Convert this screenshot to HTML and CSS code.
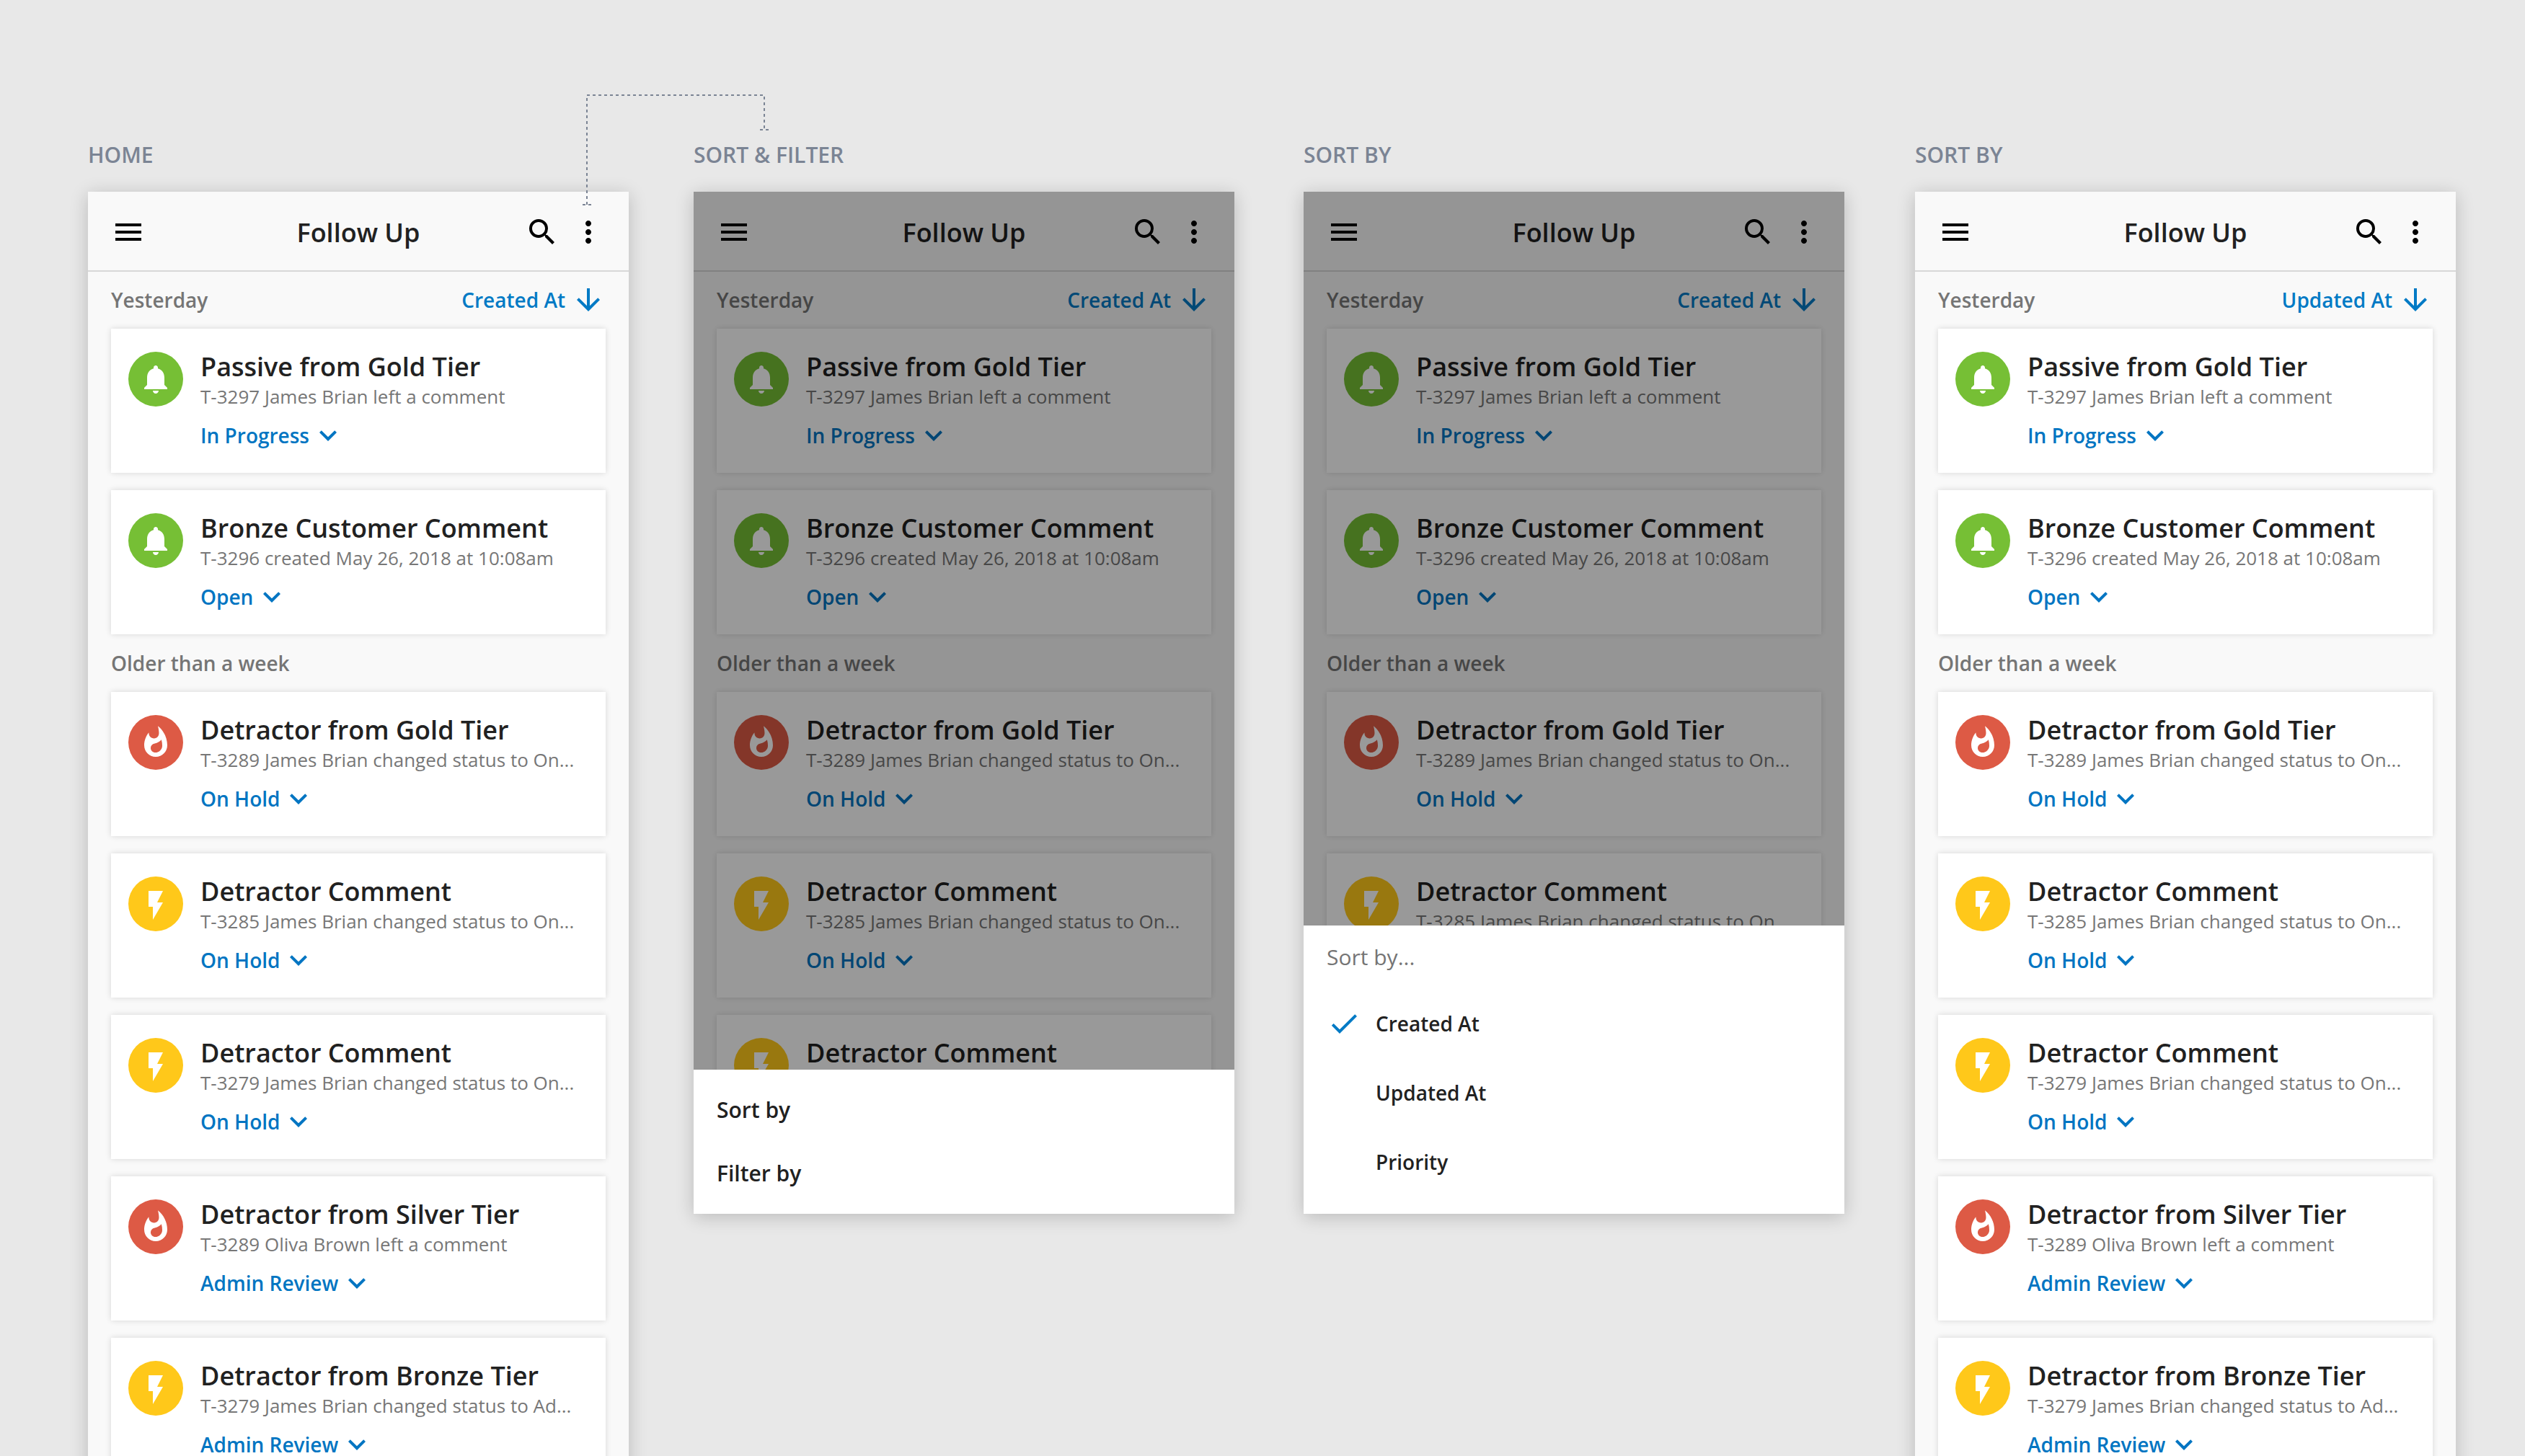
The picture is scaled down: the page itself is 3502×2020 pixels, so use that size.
FILE: index.html
```html
<!DOCTYPE html>
<html lang="en">
<head>
<meta charset="utf-8">
<meta name="viewport" content="width=device-width, initial-scale=1">
<title>Follow Up</title>
<link rel="stylesheet" href="styles.css">
</head>
<body>
<svg class="sprite" aria-hidden="true">
  <symbol id="menu" viewBox="0 0 24 24"><path d="M3 18h18v-2H3v2zm0-5h18v-2H3v2zm0-7v2h18V6H3z"/></symbol>
  <symbol id="search" viewBox="0 0 24 24"><path d="M15.5 14h-.79l-.28-.27A6.47 6.47 0 0 0 16 9.5 6.5 6.5 0 1 0 9.5 16c1.61 0 3.09-.59 4.23-1.57l.27.28v.79l5 4.99L20.49 19l-4.99-5zm-6 0C7.01 14 5 11.99 5 9.5S7.01 5 9.5 5 14 7.01 14 9.5 11.99 14 9.5 14z"/></symbol>
  <symbol id="more" viewBox="0 0 24 24"><path d="M12 8c1.1 0 2-.9 2-2s-.9-2-2-2-2 .9-2 2 .9 2 2 2zm0 2c-1.1 0-2 .9-2 2s.9 2 2 2 2-.9 2-2-.9-2-2-2zm0 6c-1.1 0-2 .9-2 2s.9 2 2 2 2-.9 2-2-.9-2-2-2z"/></symbol>
  <symbol id="arrow" viewBox="0 0 24 24"><path d="M20 12l-1.41-1.41L13 16.17V4h-2v12.17l-5.58-5.59L4 12l8 8 8-8z"/></symbol>
  <symbol id="chevron" viewBox="0 0 24 24"><path d="M16.59 8.59L12 13.17 7.41 8.59 6 10l6 6 6-6z"/></symbol>
  <symbol id="check" viewBox="0 0 24 24"><path d="M9 16.17L4.83 12l-1.42 1.41L9 19 21 7l-1.41-1.41z"/></symbol>
  <symbol id="bell" viewBox="0 0 24 24"><path d="M12 22c1.1 0 2-.9 2-2h-4c0 1.1.89 2 2 2zm6-6v-5c0-3.07-1.64-5.64-4.5-6.32V4c0-.83-.67-1.5-1.5-1.5s-1.5.67-1.5 1.5v.68C7.63 5.36 6 7.92 6 11v5l-2 2v1h16v-1l-2-2z"/></symbol>
  <symbol id="fire" viewBox="0 0 24 24"><path d="M13.5.67s.74 2.65.74 4.8c0 2.06-1.35 3.73-3.41 3.73-2.07 0-3.63-1.67-3.63-3.73l.03-.36C5.21 7.51 4 10.62 4 14c0 4.42 3.58 8 8 8s8-3.58 8-8C20 8.61 17.41 3.8 13.5.67zM11.71 19c-1.78 0-3.22-1.4-3.22-3.14 0-1.62 1.05-2.76 2.81-3.12 1.77-.36 3.6-1.21 4.62-2.58.39 1.29.59 2.65.59 4.04 0 2.65-2.15 4.8-4.8 4.8z"/></symbol>
  <symbol id="bolt" viewBox="0 -1 24 24"><path d="M7 2v11h3v9l7-12h-4l4-8z"/></symbol>
</svg>

<main class="board">

  <section class="frame">
    <h2 class="frame-label">HOME</h2>
    <div class="screen">
      <header class="app-bar">
        <button class="icon-button" type="button" aria-label="Menu"><svg class="icon"><use href="#menu"/></svg></button>
        <h1 class="app-title">Follow Up</h1>
        <div class="actions">
          <button class="icon-button" type="button" aria-label="Search"><svg class="icon"><use href="#search"/></svg></button>
          <button class="icon-button" type="button" aria-label="More"><svg class="icon"><use href="#more"/></svg></button>
        </div>
      </header>
      <div class="feed">
        <div class="group-head"><h3 class="group-title">Yesterday</h3><button class="sort-button" type="button">Created At<svg class="icon"><use href="#arrow"/></svg></button></div>
        <div class="cards">
          <article class="card">
            <span class="badge green"><svg class="icon"><use href="#bell"/></svg></span>
            <div class="card-body">
              <h4 class="card-title">Passive from Gold Tier</h4>
              <p class="card-text">T-3297 James Brian left a comment</p>
              <div class="status"><select class="status-select" aria-label="Status"><option>Open</option><option selected>In Progress</option><option>On Hold</option><option>Admin Review</option></select><svg class="icon"><use href="#chevron"/></svg></div>
            </div>
          </article>
          <article class="card">
            <span class="badge green"><svg class="icon"><use href="#bell"/></svg></span>
            <div class="card-body">
              <h4 class="card-title">Bronze Customer Comment</h4>
              <p class="card-text">T-3296 created May 26, 2018 at 10:08am</p>
              <div class="status"><select class="status-select" aria-label="Status"><option selected>Open</option><option>In Progress</option><option>On Hold</option><option>Admin Review</option></select><svg class="icon"><use href="#chevron"/></svg></div>
            </div>
          </article>
        </div>
        <div class="group-head"><h3 class="group-title">Older than a week</h3></div>
        <div class="cards">
          <article class="card">
            <span class="badge red"><svg class="icon"><use href="#fire"/></svg></span>
            <div class="card-body">
              <h4 class="card-title">Detractor from Gold Tier</h4>
              <p class="card-text">T-3289 James Brian changed status to On...</p>
              <div class="status"><select class="status-select" aria-label="Status"><option>Open</option><option>In Progress</option><option selected>On Hold</option><option>Admin Review</option></select><svg class="icon"><use href="#chevron"/></svg></div>
            </div>
          </article>
          <article class="card">
            <span class="badge yellow"><svg class="icon"><use href="#bolt"/></svg></span>
            <div class="card-body">
              <h4 class="card-title">Detractor Comment</h4>
              <p class="card-text">T-3285 James Brian changed status to On...</p>
              <div class="status"><select class="status-select" aria-label="Status"><option>Open</option><option>In Progress</option><option selected>On Hold</option><option>Admin Review</option></select><svg class="icon"><use href="#chevron"/></svg></div>
            </div>
          </article>
          <article class="card">
            <span class="badge yellow"><svg class="icon"><use href="#bolt"/></svg></span>
            <div class="card-body">
              <h4 class="card-title">Detractor Comment</h4>
              <p class="card-text">T-3279 James Brian changed status to On...</p>
              <div class="status"><select class="status-select" aria-label="Status"><option>Open</option><option>In Progress</option><option selected>On Hold</option><option>Admin Review</option></select><svg class="icon"><use href="#chevron"/></svg></div>
            </div>
          </article>
          <article class="card">
            <span class="badge red"><svg class="icon"><use href="#fire"/></svg></span>
            <div class="card-body">
              <h4 class="card-title">Detractor from Silver Tier</h4>
              <p class="card-text">T-3289 Oliva Brown left a comment</p>
              <div class="status"><select class="status-select" aria-label="Status"><option>Open</option><option>In Progress</option><option>On Hold</option><option selected>Admin Review</option></select><svg class="icon"><use href="#chevron"/></svg></div>
            </div>
          </article>
          <article class="card">
            <span class="badge yellow"><svg class="icon"><use href="#bolt"/></svg></span>
            <div class="card-body">
              <h4 class="card-title">Detractor from Bronze Tier</h4>
              <p class="card-text">T-3279 James Brian changed status to Ad...</p>
              <div class="status"><select class="status-select" aria-label="Status"><option>Open</option><option>In Progress</option><option>On Hold</option><option selected>Admin Review</option></select><svg class="icon"><use href="#chevron"/></svg></div>
            </div>
          </article>
        </div>
      </div>
    </div>
    <svg class="connector" viewBox="0 0 268 168" aria-hidden="true">
      <path d="M12 166V14M12 14H258V62M6 166h12M252 62h12"/>
    </svg>
  </section>

  <section class="frame">
    <h2 class="frame-label">SORT &amp; FILTER</h2>
    <div class="screen short">
      <header class="app-bar">
        <button class="icon-button" type="button" aria-label="Menu"><svg class="icon"><use href="#menu"/></svg></button>
        <h1 class="app-title">Follow Up</h1>
        <div class="actions">
          <button class="icon-button" type="button" aria-label="Search"><svg class="icon"><use href="#search"/></svg></button>
          <button class="icon-button" type="button" aria-label="More"><svg class="icon"><use href="#more"/></svg></button>
        </div>
      </header>
      <div class="feed">
        <div class="group-head"><h3 class="group-title">Yesterday</h3><button class="sort-button" type="button">Created At<svg class="icon"><use href="#arrow"/></svg></button></div>
        <div class="cards">
          <article class="card">
            <span class="badge green"><svg class="icon"><use href="#bell"/></svg></span>
            <div class="card-body">
              <h4 class="card-title">Passive from Gold Tier</h4>
              <p class="card-text">T-3297 James Brian left a comment</p>
              <div class="status"><select class="status-select" aria-label="Status"><option>Open</option><option selected>In Progress</option><option>On Hold</option><option>Admin Review</option></select><svg class="icon"><use href="#chevron"/></svg></div>
            </div>
          </article>
          <article class="card">
            <span class="badge green"><svg class="icon"><use href="#bell"/></svg></span>
            <div class="card-body">
              <h4 class="card-title">Bronze Customer Comment</h4>
              <p class="card-text">T-3296 created May 26, 2018 at 10:08am</p>
              <div class="status"><select class="status-select" aria-label="Status"><option selected>Open</option><option>In Progress</option><option>On Hold</option><option>Admin Review</option></select><svg class="icon"><use href="#chevron"/></svg></div>
            </div>
          </article>
        </div>
        <div class="group-head"><h3 class="group-title">Older than a week</h3></div>
        <div class="cards">
          <article class="card">
            <span class="badge red"><svg class="icon"><use href="#fire"/></svg></span>
            <div class="card-body">
              <h4 class="card-title">Detractor from Gold Tier</h4>
              <p class="card-text">T-3289 James Brian changed status to On...</p>
              <div class="status"><select class="status-select" aria-label="Status"><option>Open</option><option>In Progress</option><option selected>On Hold</option><option>Admin Review</option></select><svg class="icon"><use href="#chevron"/></svg></div>
            </div>
          </article>
          <article class="card">
            <span class="badge yellow"><svg class="icon"><use href="#bolt"/></svg></span>
            <div class="card-body">
              <h4 class="card-title">Detractor Comment</h4>
              <p class="card-text">T-3285 James Brian changed status to On...</p>
              <div class="status"><select class="status-select" aria-label="Status"><option>Open</option><option>In Progress</option><option selected>On Hold</option><option>Admin Review</option></select><svg class="icon"><use href="#chevron"/></svg></div>
            </div>
          </article>
          <article class="card">
            <span class="badge yellow"><svg class="icon"><use href="#bolt"/></svg></span>
            <div class="card-body">
              <h4 class="card-title">Detractor Comment</h4>
            </div>
          </article>
        </div>
      </div>
      <div class="overlay">
        <div class="sheet menu-sheet">
          <button class="sheet-button" type="button">Sort by</button>
          <button class="sheet-button" type="button">Filter by</button>
        </div>
      </div>
    </div>
  </section>

  <section class="frame">
    <h2 class="frame-label">SORT BY</h2>
    <div class="screen short">
      <header class="app-bar">
        <button class="icon-button" type="button" aria-label="Menu"><svg class="icon"><use href="#menu"/></svg></button>
        <h1 class="app-title">Follow Up</h1>
        <div class="actions">
          <button class="icon-button" type="button" aria-label="Search"><svg class="icon"><use href="#search"/></svg></button>
          <button class="icon-button" type="button" aria-label="More"><svg class="icon"><use href="#more"/></svg></button>
        </div>
      </header>
      <div class="feed">
        <div class="group-head"><h3 class="group-title">Yesterday</h3><button class="sort-button" type="button">Created At<svg class="icon"><use href="#arrow"/></svg></button></div>
        <div class="cards">
          <article class="card">
            <span class="badge green"><svg class="icon"><use href="#bell"/></svg></span>
            <div class="card-body">
              <h4 class="card-title">Passive from Gold Tier</h4>
              <p class="card-text">T-3297 James Brian left a comment</p>
              <div class="status"><select class="status-select" aria-label="Status"><option>Open</option><option selected>In Progress</option><option>On Hold</option><option>Admin Review</option></select><svg class="icon"><use href="#chevron"/></svg></div>
            </div>
          </article>
          <article class="card">
            <span class="badge green"><svg class="icon"><use href="#bell"/></svg></span>
            <div class="card-body">
              <h4 class="card-title">Bronze Customer Comment</h4>
              <p class="card-text">T-3296 created May 26, 2018 at 10:08am</p>
              <div class="status"><select class="status-select" aria-label="Status"><option selected>Open</option><option>In Progress</option><option>On Hold</option><option>Admin Review</option></select><svg class="icon"><use href="#chevron"/></svg></div>
            </div>
          </article>
        </div>
        <div class="group-head"><h3 class="group-title">Older than a week</h3></div>
        <div class="cards">
          <article class="card">
            <span class="badge red"><svg class="icon"><use href="#fire"/></svg></span>
            <div class="card-body">
              <h4 class="card-title">Detractor from Gold Tier</h4>
              <p class="card-text">T-3289 James Brian changed status to On...</p>
              <div class="status"><select class="status-select" aria-label="Status"><option>Open</option><option>In Progress</option><option selected>On Hold</option><option>Admin Review</option></select><svg class="icon"><use href="#chevron"/></svg></div>
            </div>
          </article>
          <article class="card">
            <span class="badge yellow"><svg class="icon"><use href="#bolt"/></svg></span>
            <div class="card-body">
              <h4 class="card-title">Detractor Comment</h4>
              <p class="card-text">T-3285 James Brian changed status to On...</p>
            </div>
          </article>
        </div>
      </div>
      <div class="overlay">
        <fieldset class="sheet sort-sheet">
          <legend class="sheet-title">Sort by...</legend>
          <label class="choice"><input class="choice-input" type="radio" name="sort" checked><svg class="icon"><use href="#check"/></svg><span>Created At</span></label>
          <label class="choice"><input class="choice-input" type="radio" name="sort"><svg class="icon"><use href="#check"/></svg><span>Updated At</span></label>
          <label class="choice"><input class="choice-input" type="radio" name="sort"><svg class="icon"><use href="#check"/></svg><span>Priority</span></label>
        </fieldset>
      </div>
    </div>
  </section>

  <section class="frame">
    <h2 class="frame-label">SORT BY</h2>
    <div class="screen">
      <header class="app-bar">
        <button class="icon-button" type="button" aria-label="Menu"><svg class="icon"><use href="#menu"/></svg></button>
        <h1 class="app-title">Follow Up</h1>
        <div class="actions">
          <button class="icon-button" type="button" aria-label="Search"><svg class="icon"><use href="#search"/></svg></button>
          <button class="icon-button" type="button" aria-label="More"><svg class="icon"><use href="#more"/></svg></button>
        </div>
      </header>
      <div class="feed">
        <div class="group-head"><h3 class="group-title">Yesterday</h3><button class="sort-button" type="button">Updated At<svg class="icon"><use href="#arrow"/></svg></button></div>
        <div class="cards">
          <article class="card">
            <span class="badge green"><svg class="icon"><use href="#bell"/></svg></span>
            <div class="card-body">
              <h4 class="card-title">Passive from Gold Tier</h4>
              <p class="card-text">T-3297 James Brian left a comment</p>
              <div class="status"><select class="status-select" aria-label="Status"><option>Open</option><option selected>In Progress</option><option>On Hold</option><option>Admin Review</option></select><svg class="icon"><use href="#chevron"/></svg></div>
            </div>
          </article>
          <article class="card">
            <span class="badge green"><svg class="icon"><use href="#bell"/></svg></span>
            <div class="card-body">
              <h4 class="card-title">Bronze Customer Comment</h4>
              <p class="card-text">T-3296 created May 26, 2018 at 10:08am</p>
              <div class="status"><select class="status-select" aria-label="Status"><option selected>Open</option><option>In Progress</option><option>On Hold</option><option>Admin Review</option></select><svg class="icon"><use href="#chevron"/></svg></div>
            </div>
          </article>
        </div>
        <div class="group-head"><h3 class="group-title">Older than a week</h3></div>
        <div class="cards">
          <article class="card">
            <span class="badge red"><svg class="icon"><use href="#fire"/></svg></span>
            <div class="card-body">
              <h4 class="card-title">Detractor from Gold Tier</h4>
              <p class="card-text">T-3289 James Brian changed status to On...</p>
              <div class="status"><select class="status-select" aria-label="Status"><option>Open</option><option>In Progress</option><option selected>On Hold</option><option>Admin Review</option></select><svg class="icon"><use href="#chevron"/></svg></div>
            </div>
          </article>
          <article class="card">
            <span class="badge yellow"><svg class="icon"><use href="#bolt"/></svg></span>
            <div class="card-body">
              <h4 class="card-title">Detractor Comment</h4>
              <p class="card-text">T-3285 James Brian changed status to On...</p>
              <div class="status"><select class="status-select" aria-label="Status"><option>Open</option><option>In Progress</option><option selected>On Hold</option><option>Admin Review</option></select><svg class="icon"><use href="#chevron"/></svg></div>
            </div>
          </article>
          <article class="card">
            <span class="badge yellow"><svg class="icon"><use href="#bolt"/></svg></span>
            <div class="card-body">
              <h4 class="card-title">Detractor Comment</h4>
              <p class="card-text">T-3279 James Brian changed status to On...</p>
              <div class="status"><select class="status-select" aria-label="Status"><option>Open</option><option>In Progress</option><option selected>On Hold</option><option>Admin Review</option></select><svg class="icon"><use href="#chevron"/></svg></div>
            </div>
          </article>
          <article class="card">
            <span class="badge red"><svg class="icon"><use href="#fire"/></svg></span>
            <div class="card-body">
              <h4 class="card-title">Detractor from Silver Tier</h4>
              <p class="card-text">T-3289 Oliva Brown left a comment</p>
              <div class="status"><select class="status-select" aria-label="Status"><option>Open</option><option>In Progress</option><option>On Hold</option><option selected>Admin Review</option></select><svg class="icon"><use href="#chevron"/></svg></div>
            </div>
          </article>
          <article class="card">
            <span class="badge yellow"><svg class="icon"><use href="#bolt"/></svg></span>
            <div class="card-body">
              <h4 class="card-title">Detractor from Bronze Tier</h4>
              <p class="card-text">T-3279 James Brian changed status to Ad...</p>
              <div class="status"><select class="status-select" aria-label="Status"><option>Open</option><option>In Progress</option><option>On Hold</option><option selected>Admin Review</option></select><svg class="icon"><use href="#chevron"/></svg></div>
            </div>
          </article>
        </div>
      </div>
    </div>
  </section>

</main>
</body>
</html>
```
FILE: styles.css
```css
* {
  box-sizing: border-box;
}

body {
  margin: 0;
  background: #e8e8e8;
  color: #212121;
  font-family: "Open Sans", "Noto Sans", sans-serif;
  font-size: 28px;
}

h1, h2, h3, h4, p {
  margin: 0;
}

button, select {
  margin: 0;
  padding: 0;
  border: 0;
  background: none;
  color: inherit;
  font: inherit;
  cursor: pointer;
}

.sprite {
  display: none;
}

.icon {
  display: block;
  flex: none;
  width: 48px;
  height: 48px;
  fill: currentColor;
}

/* Board of screens */
.board {
  display: flex;
  align-items: flex-start;
  height: 100vh;
  padding: 192px 96px 0 122px;
  overflow: hidden;
}

.frame {
  position: relative;
  flex: 1 1 0;
  min-width: 0;
}

.frame:nth-child(2) {
  margin-left: 90px;
}

.frame:nth-child(3) {
  margin-left: 96px;
}

.frame:nth-child(4) {
  margin-left: 98px;
}

.frame-label {
  margin-bottom: 28px;
  color: #7b8494;
  font-size: 30px;
  font-weight: 600;
  line-height: 46px;
}

.screen {
  position: relative;
  background: #f9f9f9;
  box-shadow: 0 4px 24px rgba(0, 0, 0, 0.2);
}

.screen.short {
  height: 1418px;
  overflow: hidden;
}

/* App bar */
.app-bar {
  display: grid;
  grid-template-columns: 1fr auto 1fr;
  align-items: center;
  margin-bottom: -1px;
  padding: 32px 32px 29px;
  border-bottom: 2px solid #d8d8d8;
}

.icon-button {
  width: 48px;
  height: 48px;
  color: #000;
}

.app-title {
  padding-top: 2px;
  font-size: 36px;
  font-weight: 600;
  line-height: 46px;
}

.actions {
  display: flex;
  justify-content: flex-end;
  gap: 16px;
}

/* Feed */
.feed {
  padding: 0 32px 32px;
}

.group-head {
  display: flex;
  align-items: center;
  justify-content: space-between;
  height: 80px;
}

.group-title {
  color: #757575;
  font-size: 28px;
  font-weight: 600;
}

.sort-button {
  display: flex;
  align-items: center;
  gap: 8px;
  color: #007ac5;
  font-weight: 600;
}

.cards {
  display: grid;
  gap: 24px;
}

.card {
  display: flex;
  gap: 24px;
  min-height: 200px;
  padding: 28px 24px;
  background: #fff;
  box-shadow: 0 0 8px rgba(0, 0, 0, 0.14);
}

.badge {
  display: grid;
  place-items: center;
  flex: none;
  width: 76px;
  height: 76px;
  margin-top: 4px;
  border-radius: 50%;
  color: #fff;
}

.green {
  background: #76bf35;
}

.red {
  background: #dd5a45;
}

.yellow {
  background: #ffc81a;
}

.card-body {
  flex: 1;
  min-width: 0;
}

.card-title {
  font-size: 36px;
  font-weight: 600;
  line-height: 50px;
}

.card-text {
  color: #777;
  font-size: 26px;
  line-height: 32px;
  white-space: nowrap;
}

.status {
  display: flex;
  align-items: center;
  gap: 2px;
  margin-top: 14px;
  color: #0075c2;
}

.status-select {
  appearance: none;
  field-sizing: content;
  font-size: 28px;
  font-weight: 600;
  line-height: 46px;
}

/* Bottom sheets */
.overlay {
  position: absolute;
  inset: 0;
  display: flex;
  flex-direction: column;
  justify-content: flex-end;
  background: rgba(0, 0, 0, 0.4);
}

.sheet {
  margin: 0;
  border: 0;
  background: #fff;
}

.menu-sheet {
  display: grid;
  padding: 12px 0;
}

.sheet-button {
  padding: 0 32px;
  font-size: 30px;
  font-weight: 600;
  line-height: 88px;
  text-align: left;
}

.sort-sheet {
  padding: 0 32px 24px;
}

.sheet-title {
  float: left;
  width: 100%;
  padding: 0;
  color: #757575;
  font-size: 30px;
  line-height: 88px;
}

.choice {
  clear: both;
  display: flex;
  align-items: center;
  gap: 20px;
  height: 96px;
  font-weight: 600;
  cursor: pointer;
}

.choice-input {
  position: absolute;
  width: 48px;
  height: 48px;
  margin: 0;
  appearance: none;
}

.choice .icon {
  visibility: hidden;
  color: #007ac5;
}

.choice-input:checked + .icon {
  visibility: visible;
}

/* Flow line from the overflow button to the next screen */
.connector {
  position: absolute;
  top: -74px;
  right: -198px;
  width: 268px;
  height: 168px;
  fill: none;
  stroke: #7b8494;
  stroke-width: 2;
  stroke-dasharray: 4 4;
  pointer-events: none;
}

@media (max-width: 2000px) {
  .board {
    flex-direction: column;
    gap: 64px;
    height: auto;
    padding: 64px;
  }

  .frame:nth-child(n) {
    width: 100%;
    max-width: 750px;
    margin-left: 0;
  }

  .connector {
    display: none;
  }
}
```
